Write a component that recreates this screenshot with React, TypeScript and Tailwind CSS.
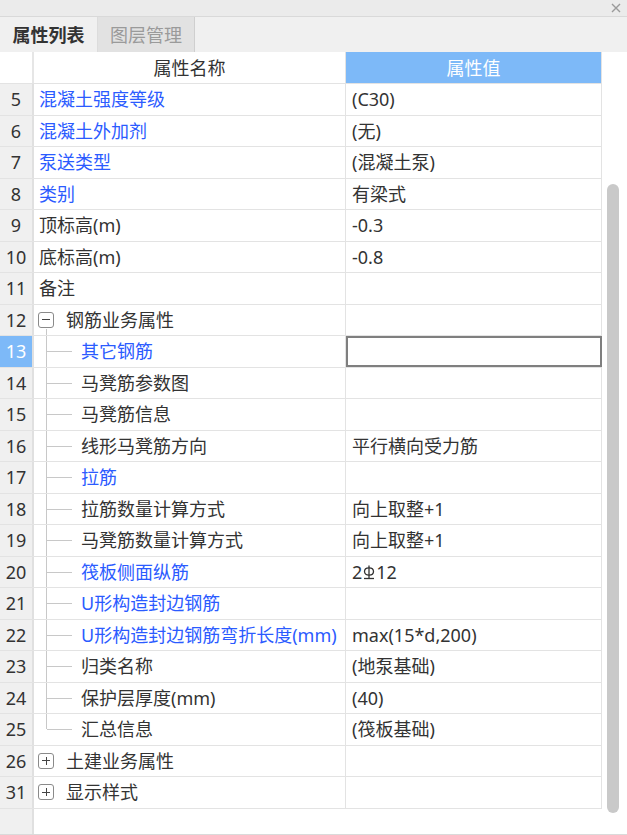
import React from 'react';

type Row = {
  num: number;
  name: string;
  value?: React.ReactNode;
  blue?: boolean;
  kind?: 'plain' | 'open' | 'closed' | 'child' | 'lastChild';
  selected?: boolean;
};

const RebarGlyph = () => (
  <svg viewBox="0 0 12 16" className="mx-[1px] inline-block h-[16px] w-[12px] align-[-2px]" fill="none" stroke="#333" strokeWidth="1.3">
    <path d="M6 1.5v13" />
    <path d="M1.5 7.5c0-2.2 2-3.6 4.5-3.6s4.5 1.4 4.5 3.6-2 3.6-4.5 3.6-4.5-1.4-4.5-3.6z" />
    <path d="M1 14.5h10" />
  </svg>
);

const rows: Row[] = [
  { num: 5, name: '混凝土强度等级', value: '(C30)', blue: true },
  { num: 6, name: '混凝土外加剂', value: '(无)', blue: true },
  { num: 7, name: '泵送类型', value: '(混凝土泵)', blue: true },
  { num: 8, name: '类别', value: '有梁式', blue: true },
  { num: 9, name: '顶标高(m)', value: '-0.3' },
  { num: 10, name: '底标高(m)', value: '-0.8' },
  { num: 11, name: '备注' },
  { num: 12, name: '钢筋业务属性', kind: 'open' },
  { num: 13, name: '其它钢筋', blue: true, kind: 'child', selected: true },
  { num: 14, name: '马凳筋参数图', kind: 'child' },
  { num: 15, name: '马凳筋信息', kind: 'child' },
  { num: 16, name: '线形马凳筋方向', value: '平行横向受力筋', kind: 'child' },
  { num: 17, name: '拉筋', blue: true, kind: 'child' },
  { num: 18, name: '拉筋数量计算方式', value: '向上取整+1', kind: 'child' },
  { num: 19, name: '马凳筋数量计算方式', value: '向上取整+1', kind: 'child' },
  {
    num: 20,
    name: '筏板侧面纵筋',
    blue: true,
    kind: 'child',
    value: (
      <>
        2<RebarGlyph />12
      </>
    ),
  },
  { num: 21, name: 'U形构造封边钢筋', blue: true, kind: 'child' },
  { num: 22, name: 'U形构造封边钢筋弯折长度(mm)', value: 'max(15*d,200)', blue: true, kind: 'child' },
  { num: 23, name: '归类名称', value: '(地泵基础)', kind: 'child' },
  { num: 24, name: '保护层厚度(mm)', value: '(40)', kind: 'child' },
  { num: 25, name: '汇总信息', value: '(筏板基础)', kind: 'lastChild' },
  { num: 26, name: '土建业务属性', kind: 'closed' },
  { num: 31, name: '显示样式', kind: 'closed' },
];

function ToggleBox({ open }: { open: boolean }) {
  return (
    <span className="relative z-10 inline-flex h-[16px] w-[16px] shrink-0 items-center justify-center rounded-[3px] border border-[#8a8a8a] bg-white">
      <span className="absolute h-px w-[8px] bg-[#444]" />
      {!open && <span className="absolute h-[8px] w-px bg-[#444]" />}
    </span>
  );
}

function NameCell({ row }: { row: Row }) {
  const color = row.blue ? 'text-[#2b5bff]' : 'text-[#333]';
  const kind = row.kind ?? 'plain';

  if (kind === 'open' || kind === 'closed') {
    return (
      <div className="relative flex h-full items-center pl-[4px]">
        <ToggleBox open={kind === 'open'} />
        {kind === 'open' && (
          <span className="absolute bottom-0 left-[12px] top-[24px] w-px bg-[#c8c8c8]" />
        )}
        <span className={`ml-[12px] ${color}`}>{row.name}</span>
      </div>
    );
  }

  if (kind === 'child' || kind === 'lastChild') {
    return (
      <div className="relative flex h-full items-center pl-[47px]">
        <span
          className={`absolute left-[12px] top-0 w-px bg-[#c8c8c8] ${kind === 'lastChild' ? 'h-1/2' : 'h-full'}`}
        />
        <span className="absolute left-[13px] top-1/2 h-px w-[25px] bg-[#c8c8c8]" />
        <span className={`whitespace-nowrap ${color}`}>{row.name}</span>
      </div>
    );
  }

  return (
    <div className="flex h-full items-center pl-[5px]">
      <span className={color}>{row.name}</span>
    </div>
  );
}

export default function App() {
  return (
    <div
      className="flex h-[835px] w-[627px] flex-col overflow-hidden bg-white text-[18px] leading-none text-[#333]"
      style={{ fontFamily: '"Noto Sans", "Noto Sans CJK SC", sans-serif' }}
    >
      {/* title strip */}
      <div className="flex h-[17px] shrink-0 items-center justify-end border-b border-[#d9d9d9] bg-[#ebebeb] pr-[6px]">
        <svg viewBox="0 0 10 10" className="h-[10px] w-[10px]" stroke="#9a9a9a" strokeWidth="1.4">
          <path d="M1 1l8 8M9 1l-8 8" />
        </svg>
      </div>

      {/* tabs */}
      <div className="flex h-[35px] shrink-0 items-stretch bg-[#f0f0f0]">
        <div className="flex w-[98px] items-center justify-center border-r border-[#dcdcdc] font-bold text-[#333]">
          属性列表
        </div>
        <div className="flex w-[97px] items-center justify-center border-r border-[#cfcfcf] bg-[#e2e2e2] text-[#9a9a9a]">
          图层管理
        </div>
      </div>

      {/* body */}
      <div className="flex min-h-0 flex-1 border-b border-[#dadada]">
        <div className="flex w-[602px] flex-col">
          {/* header */}
          <div className="grid h-[32px] shrink-0 grid-cols-[34px_312px_256px] border-b border-[#e3e3e3]">
            <div className="border-r-2 border-[#e6e6e6] bg-white" />
            <div className="flex items-center justify-center border-r border-[#e3e3e3] text-[#333]">
              属性名称
            </div>
            <div className="flex items-center justify-center border-r border-[#e3e3e3] bg-[#7db9f8] text-white">
              属性值
            </div>
          </div>

          {rows.map((row) => (
            <div
              key={row.num}
              className="grid h-[31.5px] shrink-0 grid-cols-[34px_312px_256px] border-b border-[#e3e3e3]"
            >
              <div
                className={`flex items-center justify-center border-r-2 border-[#e0e0e0] ${
                  row.selected ? 'bg-[#7db9f8] text-white' : 'bg-[#f0f0f0] text-[#333]'
                }`}
              >
                {row.num}
              </div>
              <div className="border-r border-[#e3e3e3]">
                <NameCell row={row} />
              </div>
              <div
                className={`flex items-center whitespace-nowrap border-r border-[#e3e3e3] pl-[6px] ${
                  row.selected ? 'outline-2 -outline-offset-2 outline-[#7f7f7f]' : ''
                }`}
              >
                {row.value}
              </div>
            </div>
          ))}

          <div className="flex flex-1">
            <div className="w-[34px] border-r-2 border-[#e0e0e0] bg-[#f0f0f0]" />
          </div>
        </div>

        {/* scrollbar */}
        <div className="flex flex-1 flex-col items-center pt-[132px] pb-[21px]">
          <div className="ml-[-3px] w-[12px] flex-1 rounded-full bg-[#c9c9c9]" />
        </div>
      </div>
    </div>
  );
}
